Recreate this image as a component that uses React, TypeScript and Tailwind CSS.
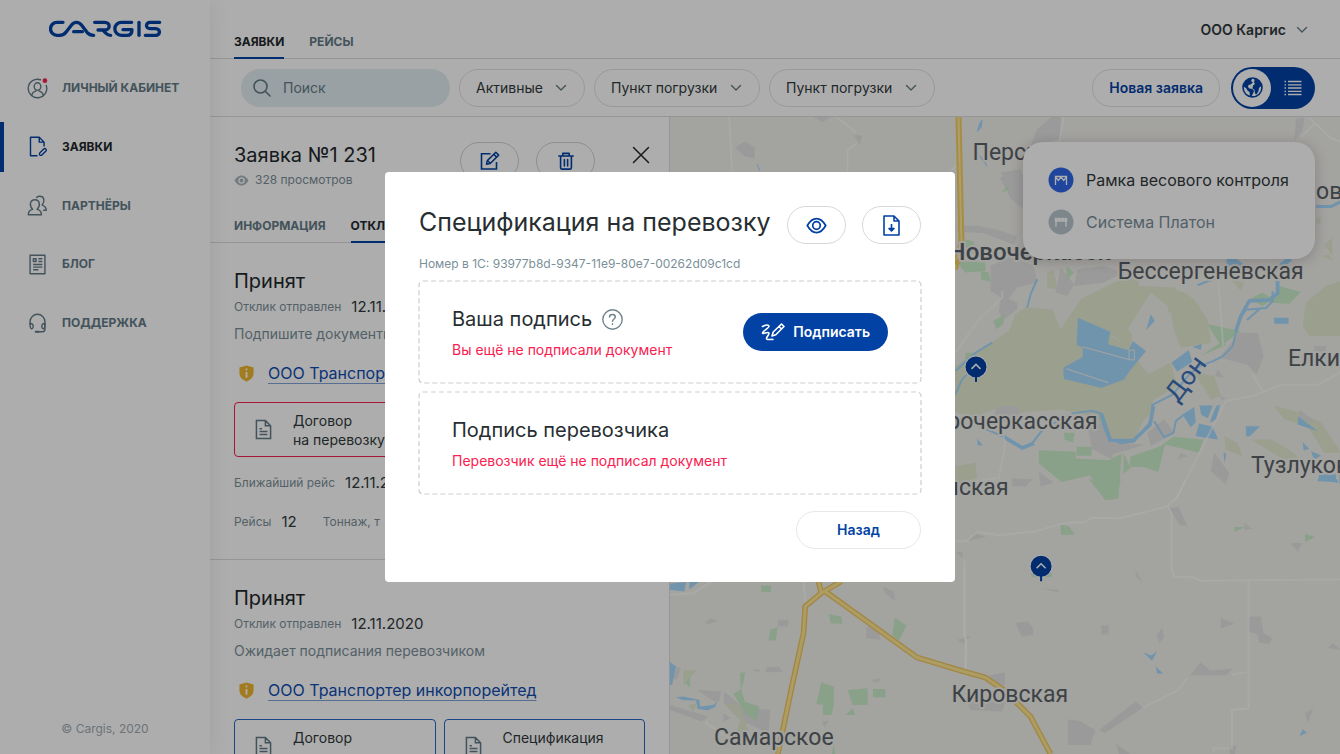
import type { ReactNode } from 'react';

const filters = ['Активные', 'Пункт погрузки', 'Пункт погрузки'];

function Svg({ className, children, box = '0 0 24 24' }: { className: string; children: ReactNode; box?: string }) {
  return (
    <svg
      className={className}
      viewBox={box}
      fill="none"
      stroke="currentColor"
      strokeWidth={1.6}
      strokeLinecap="round"
      strokeLinejoin="round"
      aria-hidden="true"
    >
      {children}
    </svg>
  );
}

function Chevron({ className }: { className: string }) {
  return (
    <Svg className={className} box="0 0 12 12">
      <path d="M1.5 3.5L6 8l4.500-4.500" strokeWidth={1.400} />
    </Svg>
  );
}

function Logo() {
  return (
    <svg
      className="w-[113px] h-[18px] text-[#0342a5]"
      viewBox="146 61 339 54"
      fill="none"
      stroke="currentColor"
      strokeWidth={10}
      strokeLinecap="round"
      strokeLinejoin="round"
      role="img"
      aria-label="Cargis"
    >
      <path d="M188 68H170a19.500 19.500 0 0 0 0 39h8c10 0 15-4 20-11l15-19c8-11 22-12 31 0l16 21c6 7 10 9 20 9" />
      <path d="M220 96h26" />
      <path d="M283 68h30c18 0 18 23 0 23h-20M308 92l10 10c4 4 7 5 13 5" />
      <path d="M394 68H363a19.500 19.500 0 0 0 0 39h17c10 0 15-5 15-17h-27" />
      <path d="M416 68v39" />
      <path d="M478 68h-29c-14 0-14 19 0 19h17c15 0 15 20 0 20h-31" />
    </svg>
  );
}

const EyeIcon = ({ className }: { className: string }) => (
  <Svg className={className}>
    <path d="M1.500 12C4.500 6.500 8 4 12 4s7.500 2.500 10.500 8C19.500 17.500 16 20 12 20S4.500 17.500 1.500 12z" strokeWidth={2} />
    <circle cx="12" cy="12" r="4.300" strokeWidth={2} />
  </Svg>
);

const DocIcon = ({ className }: { className: string }) => (
  <Svg className={className} box="0 0 18 22">
    <path d="M1.500 1.500h9.500l5.500 5.500v13.500h-15zM11 1.500V7h5.500M4.800 10.200h2.500M4.800 13.200h8.400M4.800 16.400h8.400" strokeLinecap="butt" strokeLinejoin="miter" />
  </Svg>
);

const ShieldIcon = () => (
  <svg className="w-[15px] h-[17px] ml-[5px] mr-1" viewBox="0 0 16 18" aria-hidden="true">
    <path d="M8 .5l7.500 2v6.500c0 4-3 6.500-7.500 8.700C3.500 15.500.5 13 .5 9V2.500z" fill="#edb52c" />
    <path d="M8 3.600v2M8 7.500v6" stroke="#fff" strokeWidth="2" />
  </svg>
);

const navItems = [
  {
    label: 'Личный кабинет',
    icon: (
      <>
        <path d="M15.500 2A10.600 10.600 0 1 0 22 8.500" />
        <ellipse cx="12" cy="9.800" rx="3.800" ry="4.300" />
        <path d="M5.300 20c.5-2.800 2-4.300 4.700-5M18.700 20c-.5-2.800-2-4.300-4.700-5" />
        <circle cx="20.500" cy="3" r="2.700" fill="#fa2050" stroke="none" />
      </>
    ),
  },
  {
    label: 'Заявки',
    active: true,
    icon: (
      <>
        <path d="M12 22.500H4V1.500h10l5.500 5.500v5M14 1.500V7h5.500" strokeLinecap="butt" />
        <path d="M14.500 19.500l4.700-4.700c1.500-1.300 3.800.8 2.500 2.400l-4.700 4.600c-2 1-3.600-.5-2.500-2.300z" />
      </>
    ),
  },
  {
    label: 'Партнёры',
    icon: (
      <>
        <path d="M1.500 22.500c0-4 1.500-5.200 5-6-4.500-4.500-3-11 2.500-11s7 6.500 2.500 11c3.500.8 5 2 5 6z" />
        <path d="M11 2.800c1-1 2.200-1.300 3.500-1.300 5.200 0 6.500 5.500 2.800 10 3.200 1 4.700 2.300 4.700 6h-3" />
      </>
    ),
  },
  {
    label: 'Блог',
    icon: (
      <>
        <path d="M3.500 1.500h17v21h-17z" />
        <path d="M7.300 5.500h3v3h-3zM13 5.500h4.500M13 8.500h4.500M7 12h10.500M7 15h10.500M7 18h6" strokeLinecap="butt" />
      </>
    ),
  },
  {
    label: 'Поддержка',
    icon: (
      <>
        <path d="M3.500 12.500V10a8.500 8.500 0 0 1 17 0v8.500c0 2-1 3-3 3h-5.500" />
        <path d="M3.500 12c4.500-.8 4.500 6.500 1.500 6-1.500-.5-1.500-3-1.500-6zM20.500 12c-4.500-.8-4.500 6.500-1.500 6 1.500-.5 1.500-3 1.500-6z" />
        <path d="M10 21.500h3" strokeWidth={2.400} />
      </>
    ),
  },
];

function Sidebar() {
  return (
    <aside className="relative z-10 w-[210px] shrink-0 flex flex-col bg-white shadow-[0_0_20px_rgba(0,0,0,0.08)]">
      <a href="#" className="mt-5 ml-[49px]">
        <Logo />
      </a>
      <nav className="mt-[25px] h-[285px] flex flex-col justify-between">
        {navItems.map((item) => (
          <a
            key={item.label}
            href="#"
            className={`relative h-[50px] pl-[27px] flex items-center gap-3.5 text-xs font-bold uppercase ${
              item.active ? 'text-[#22292c]' : 'text-[#637b86]'
            }`}
          >
            {item.active && <span className="absolute left-0 inset-y-0 w-1 bg-[#0342a5]" />}
            <Svg className={`w-[21px] h-[21px] ${item.active ? 'text-[#0342a5]' : ''}`}>{item.icon}</Svg>
            {item.label}
          </a>
        ))}
      </nav>
      <p className="mt-auto mb-[15px] text-center text-xs leading-5 text-[#9fabb2]">© Cargis, 2020</p>
    </aside>
  );
}

function Tab({ active, children }: { active?: boolean; children: ReactNode }) {
  return (
    <button
      type="button"
      className={`-mb-px pb-[7px] border-b-2 text-xs leading-4 font-bold uppercase ${
        active ? 'border-[#0342a5] text-[#22292c]' : 'border-transparent text-[#637b86]'
      }`}
    >
      {children}
    </button>
  );
}

function Toolbar() {
  return (
    <div className="h-[58px] shrink-0 pl-[31px] pr-[25px] flex items-center gap-[9px] border-b border-[#dcdcdc]">
      <label className="w-[209px] h-[38px] px-3 flex items-center gap-3 rounded-full bg-[#e3edf2] text-[#637b86]">
        <Svg className="w-[18px] h-[18px] shrink-0" box="0 0 18 18">
          <circle cx="7.500" cy="7.500" r="6.500" />
          <path d="M12.300 12.300L17 17" />
        </Svg>
        <input
          type="search"
          aria-label="Поиск"
          placeholder="Поиск"
          className="w-full bg-transparent text-sm outline-none placeholder:text-[#637b86]"
        />
      </label>
      {filters.map((name, i) => (
        <div key={i} className="relative">
          <select
            aria-label={name}
            className="h-[38px] pl-4 pr-[41px] appearance-none rounded-full border border-[#e2e2e2] bg-white text-sm text-[#31393c]"
          >
            <option>{name}</option>
          </select>
          <Chevron className="absolute right-[18px] top-[13px] w-3 h-3 text-[#637b86] pointer-events-none" />
        </div>
      ))}
      <button
        type="button"
        className="ml-auto h-[38px] px-4 rounded-full border border-[#e2e2e2] text-sm font-semibold text-[#0342a5]"
      >
        Новая заявка
      </button>
      <div className="ml-0.5 w-[84px] h-[42px] p-0.5 flex rounded-full bg-[#0342a5]">
        <button type="button" aria-label="Карта" className="w-[38px] h-[38px] flex items-center justify-center rounded-full bg-white text-[#0342a5]">
          <svg className="w-[21px] h-[21px]" viewBox="0 0 21 21" aria-hidden="true">
            <circle cx="10.500" cy="10.500" r="9.500" fill="#fff" stroke="currentColor" strokeWidth="1.600" />
            <path d="M1.500 8l3-5 4-2 1.500 1.500-1 1.500 2 1.500-2.500 2-2 .5-.5 2 1.500 1.500 3 .5 1.500 2-1 2.500-1.500 3-1.500-.5-.5-4-2-1.500-1.500-2.500-2-1zM12 1.500l4 1.500 3 3.500 1 4-1.500-1-1.500 1.500-.5 3-2 3.500-1.500-1-.5-3.500-2-1.500.5-3 2-1.500-1-1.500.5-2z" fill="currentColor" />
            <path d="M5 17.500l4 1.500h4l3-1.500-3 2.500H8z" fill="currentColor" />
          </svg>
        </button>
        <button type="button" aria-label="Список" className="flex-1 pl-0.5 flex items-center justify-center text-white">
          <svg className="w-[18px] h-4" viewBox="0 0 18 16" stroke="currentColor" strokeWidth="1.300" aria-hidden="true">
            <path d="M.5 1.500h1.500M4 1.500h13.500M.5 4.800h1.500M4 4.800h13.500M.5 8h1.500M4 8h13.500M.5 11.300h1.500M4 11.300h13.500M.5 14.500h1.500M4 14.500h13.500" />
          </svg>
        </button>
      </div>
    </div>
  );
}

function DocCard({ title, tone }: { title: string; tone: string }) {
  return (
    <button type="button" className={`h-[55px] pl-5 flex items-center gap-[21px] rounded border text-left text-sm leading-[19px] text-[#31393c] ${tone}`}>
      <DocIcon className="w-[17px] h-[21px] text-[#637b86]" />
      <span>
        {title}
        <br />
        на перевозку
      </span>
    </button>
  );
}

function Reply({ note, tone }: { note: string; tone: string }) {
  return (
    <article className="h-[317px] shrink-0 px-6 pt-6 border-b border-[#dcdcdc]">
      <h2 className="text-xl leading-7 text-[#22292c]">Принят</h2>
      <p className="mt-0.5 flex items-center gap-2.5 text-xs leading-5 text-[#7b8f99]">
        Отклик отправлен <span className="text-[15px] leading-5 text-[#31393c]">12.11.2020</span>
      </p>
      <p className="mt-[7px] text-sm leading-5 text-[#7b8f99]">{note}</p>
      <div className="mt-[17px] flex items-center gap-2.5">
        <ShieldIcon />
        <a href="#" className="text-base leading-6 text-[#0f4db0] underline decoration-1 underline-offset-4 decoration-[#7fa3d8]">
          ООО Транспортер инкорпорейтед
        </a>
      </div>
      <div className="mt-[17px] grid grid-cols-2 gap-2">
        <DocCard title="Договор" tone={tone} />
        <DocCard title="Спецификация" tone={tone} />
      </div>
      <p className="mt-4 flex items-center gap-2.5 text-xs leading-5 text-[#7b8f99]">
        Ближайший рейс <span className="text-[15px] leading-5 text-[#31393c]">12.11.2020</span>
      </p>
      <p className="mt-[19px] flex items-center gap-2.5 text-xs leading-5 text-[#7b8f99]">
        Рейсы <span className="mr-4 text-[15px] leading-5 text-[#31393c]">12</span>
        Тоннаж, т <span className="text-[15px] leading-5 text-[#31393c]">240</span>
      </p>
    </article>
  );
}

function RequestPanel() {
  return (
    <section className="w-[460px] shrink-0 flex flex-col overflow-hidden border-r border-[#dcdcdc] bg-white">
      <div className="h-[81px] shrink-0 pt-[25px] px-6 flex items-start">
        <div>
          <h1 className="text-xl leading-[26px] text-[#22292c]">Заявка №1 231</h1>
          <p className="mt-0.5 flex items-center gap-1.5 text-xs leading-5 text-[#7b8f99]">
            <svg className="w-[15px] h-[11px]" viewBox="0 0 15 11" aria-hidden="true">
              <path d="M.5 5.500C2.500 2 4.800.5 7.500.5s5 1.500 7 5c-2 3.500-4.300 5-7 5s-5-1.500-7-5z" fill="#a9b5bc" />
              <circle cx="7.500" cy="5.500" r="2.600" fill="#a9b5bc" stroke="#fff" strokeWidth="1.300" />
            </svg>
            328 просмотров
          </p>
        </div>
        <div className="ml-auto flex gap-[17px]">
          <button type="button" aria-label="Редактировать" className="w-[59px] h-[38px] flex items-center justify-center rounded-full border border-[#d2d2d2] text-[#0342a5]">
            <Svg className="w-5 h-5" box="0 0 20 20">
              <path d="M10.500 2.800H1.500V18h15v-7" strokeLinecap="butt" strokeLinejoin="miter" />
              <path d="M6.500 13.200l.8-3.600 8.500-8.300 2.900 2.800-8.500 8.400zM13.800 3.300l2.800 2.800M8 10l2 2" strokeWidth={1.500} />
            </Svg>
          </button>
          <button type="button" aria-label="Удалить" className="w-[59px] h-[38px] flex items-center justify-center rounded-full border border-[#d2d2d2] text-[#0342a5]">
            <Svg className="w-[18px] h-[18px]" box="0 0 20 20">
              <path d="M2 4.500h16M6.500 4V1.500h7V4M4 5v12.500c0 .8.500 1.500 1.300 1.500h9.400c.8 0 1.300-.7 1.300-1.500V5M8.200 8.500v7M11.800 8.500v7" strokeWidth={1.800} />
            </Svg>
          </button>
          <button type="button" aria-label="Закрыть" className="ml-5 mt-1 mr-[-5px] w-[18px] h-[18px] text-[#22292c]">
            <Svg className="w-[18px] h-[18px]" box="0 0 18 18">
              <path d="M1.500 1.500l15 15M16.500 1.500l-15 15" strokeWidth={1.500} />
            </Svg>
          </button>
        </div>
      </div>
      <div className="h-[45px] shrink-0 px-6 flex items-end gap-[25px] border-b border-[#dcdcdc]">
        <Tab>Информация</Tab>
        <Tab active>Отклики</Tab>
      </div>
      <Reply note="Подпишите документы" tone="border-[#fa2050]" />
      <Reply note="Ожидает подписания перевозчиком" tone="border-[#2a66c4]" />
    </section>
  );
}

const places = [
  { name: 'Персиановский', x: 972, y: 161 },
  { name: 'Бессергеневская', x: 1117, y: 280 },
  { name: 'ов', x: 1315, y: 200 },
  { name: 'Елкин', x: 1287, y: 367 },
  { name: 'Тузлуков', x: 1250, y: 473 },
  { name: 'Старочеркасская', x: 1097, y: 430, end: true },
  { name: 'Ольгинская', x: 1008, y: 495, end: true },
  { name: 'Кировская', x: 951, y: 702 },
  { name: 'Самарское', x: 714, y: 745 },
];

function MapPin({ x, y }: { x: number; y: number }) {
  return (
    <g transform={`translate(${x} ${y})`}>
      <circle r="11" fill="#0342a5" stroke="#fff" strokeWidth="1" />
      <path d="M0 9v6" stroke="#0342a5" strokeWidth="2" />
      <path d="M-4.500 2L0-2.500 4.500 2" fill="none" stroke="#fff" strokeWidth="1.500" />
    </g>
  );
}

function RegionMap() {
  return (
    <svg className="w-full h-full" viewBox="670 118 670 636" preserveAspectRatio="xMinYMin slice" role="img" aria-label="Карта региона">
      <path d="M670 118h670v636H670z" fill="#f1f0ec" />

      {/* northern steppe */}
      <g transform="translate(660 110) scale(.33333)">
        <path d="M225 115l30-18 30 20-2 32-30-8zM455 22l60-2-27 20zM580 78l26 2-7 28zM1018 205l60-15 20 10 0 110-50-45zM1130 60l70-60v90l-90 20zM890 350l60 0 60 12 60 20-10 25-90-35-80-5z" fill="#e4e4e4" />
        <path d="M1022 250l20-20 15 8zM915 390l25 8 5 40-30-20z" fill="#ccedcb" />
        <path d="M207 20l9 165M527 22l60 48M587 105l-25 18v65M870 185l20-15" stroke="#fff" strokeWidth="5" fill="none" opacity=".7" />
        <path d="M965 32l-3 22-11 13 5-20zM292 165l6 20M955 140l15 12 10 20" stroke="#a7daff" strokeWidth="3" fill="#a7daff" />
        <path d="M894 20l9 380-20 80" stroke="#f6cf62" strokeWidth="18" fill="none" />
        <path d="M894 20l9 380-20 80" stroke="#ffea9e" strokeWidth="6" fill="none" />
      </g>

      {/* roads and fields behind the legend */}
      <g transform="translate(960 0) scale(.33333)">
        <path d="M1005 360l25-5-5 40-25 30zM120 520l60-10 10 90-30-10z" fill="#e4e4e4" />
        <path d="M310 352l-15 80M1040 352l70 65 25 10 10 20M1060 375l-40 40" stroke="#fff" strokeWidth="5" fill="none" opacity=".7" />
        <path d="M1065 622h45l30-15" stroke="#a7daff" strokeWidth="9" fill="none" />
        <path d="M1090 740l22-25 3 55zM1065 655h14v18h-14zM1082 770l20-5 15 20z" fill="#e4ead2" />
        <path d="M800 800l20-20 40 30M940 810l50-30" stroke="#a7daff" strokeWidth="10" fill="none" />
      </g>

      {/* the Don valley */}
      <g transform="translate(940 240) scale(.33333)">
        <path d="M45 380l100-65 60-40 20-50 30-20 80 5 25 60 60-90 120-60 50-10 5 30 110 5 20 60-40 15-50-10-60 60-5 70 50 60 20 120-30 20-30 60-70 10-60-80-90-20-120 10-80-10-80 30-60-40-40 10z" fill="#e4ead2" />
        <path d="M690 150l40 10 30 20 40 60 10 70-90 15-20-50-10-60zM1095 190l60-50 60-20v170h-110l-20-30zM520 480l30-70 80-10 60-30 20 70-70 40-50 75h-35l5-50zM760 400l60 10 20 60-30 10zM850 590l40 20 15 40-50-20zM930 600l60 0 70 40 20 30-60-15zM1000 500l80 20 60 30 60 90-50 0-50-80-70-20zM320 100l20-10 10 60-30-5zM870 120l40 10-10 25zM45 680l60-10 5 45-65 20z" fill="#e4ead2" />
        <path d="M560 270l70-110 50 40 20 100-40 40-50-20z" fill="#f1f0ec" />
        <path d="M150 80l60-30 70 30 10 50-60 15-30 40-50-30zM360 85l40 50-20 35-35-10zM410 90l80-10 60 20-60 30-90 10zM180 170l50 20 0 20-40 30-15-20zM835 355l60-75 55 0 18 70-20 55-30-30zM830 390l20 25-28-5zM170 500l60 0 10 20-30 35-50-30zM440 560l50-10 15 60 110 5-100 30 0 15-60-30zM620 580l50-40 30 40-70 40zM820 640l45 60-10 35-45-40zM215 715l60 5-20 20h-40zM295 695l45 35-40 10zM710 660l30-10-20-10zM835 470l20 5-10 10zM1075 510l50 40-50-10zM1120 320l35 0v20h-35z" fill="#e4e4e4" />
        <path d="M295 632l110 5 0 20 100 5 38-20-10 135-40 5-45-75-85 20-68-55zM408 622h45v27h-45zM568 652l90-32 40-28 90 8-15 40-60-15-40-10-20 82-45-15-40 0zM548 640l22 45-22 18zM370 580l32 0-5 30-25-10zM985 190l30-50 65 18-35 35zM800 255l100 20-60 45zM780 350l65-45 10 12zM158 245l35-20-5 30-20 15zM925 180l40-20 30 20-30 20zM120 95l25 5 5 27-27-5zM378 80l22 20-22 22zM45 65l90 5 0 25-60 5zM75 340h30l-30 40z" fill="#ccedcb" />
        <path d="M412 235l97 42-7 38 62 18 12-28 40 30-46 56-20 28-70 26-110-27 2-35 54-30v-27l-18-10zM630 225l12 20-26 28zM692 370l52-38 10 35-45 30zM755 322l28-8-3 18zM998 235h45v18h-42zM725 525l35-22 5 45-15 15zM776 498h40l-15 38-20-10zM838 495l-12 45-20 10 20-50zM775 552l40 10 17 38-68-10zM915 560h42l-30 30h-12zM1072 530l58 45-60-20zM1085 608l20 20-17 5zM1110 635l30 12-20 15zM1135 705l50 0v22l-55-2zM848 638l8 5-5 28zM110 597l17 20h-15zM1195 705h5v28l-5 0z" fill="#a7daff" />
        <path d="M368 388l10-10 115 30 62 10-70 26-115-25z" fill="#a7daff" />
        <path d="M512 290l25 15M565 333h16v28h-16zM425 322l145 40M378 388l125 42" stroke="#f1f0ec" strokeWidth="3" fill="none" />
        <path d="M45 465l20-45 15-15M45 395l60-55 50-30M260 205l10-40 20-45M115 560l70 30 60 36 30-15 35-45 90-45 55-7 30 10 25 75 30 12 40-5 50-60 5-50 60-30 50-60 30-25 40-15 30-15 30-30 20-80 20-30 60-5 20-20v-30M640 545l30 48 28-13 7-35 25-20M918 242l38-33M770 138l50-20 50-55" stroke="#a7daff" strokeWidth="6" fill="none" />
        <path d="M885 275l15-45 25-45 60-3 25-20v-50M480 525l28 78h70l50-48 10-55M190 592l55 33 35-14" stroke="#a7daff" strokeWidth="11" fill="none" />
        <path d="M860 60l40 30M1020 80l25-20" stroke="#a7daff" strokeWidth="16" fill="none" />
        <path d="M45 340l70-100 70-65v-20M45 525l50 5 80 20 20 60-20 105-130 20M832 120l15 200M705 780l150-295 85-17 80-32h110l70-38M935 405l30 50" stroke="#fff" strokeWidth="6" fill="none" opacity=".55" />
        <path d="M45 75l20-20" stroke="#f6cf62" strokeWidth="14" />
      </g>

      {/* south-east */}
      <g transform="translate(940 480) scale(.33333)">
        <path d="M85 183l20-22 32 10zM225 430l35-5 18 20v20l-33 5zM482 437h22v27h-22zM648 465l17-22 5 30-15 17zM685 85l28-3 27 57-22-3zM910 130l26 18-26 2zM1048 190h37l-15 25zM583 270l25 40-20-15zM300 325l55 6v8zM840 415l42 17-42 13zM922 410h38l8 50 27 15-10 18-30-5-5-25-28-8zM747 587l33-40 28 25 68-5-20 20zM475 750l110-85 22 18-115 77zM382 718l35 5 47 27-15 45h-67zM50 480l42-12-25 24zM145 587l48-10v35l-20 20zM83 678l110-5-10 22-95-10zM1160 505l15-15 25 20zM1092 700l25-14-17 44zM525 790l45 32h-35zM865 800l22-5-5 27h-15zM210 5l60-5-15 22zM45 220l20-5 3 20z" fill="#e4e4e4" />
        <path d="M445 0h95l-12 55-35 5zM360 135l25 5 18 25h-42zM880 142l32 0-30 14zM1092 162l30 10-30 15zM272 280h62v12h-62z" fill="#ccedcb" />
        <path d="M607 517l25 10 17-12-15 28zM645 560l22 21h-18zM1085 748l13 10-22 10zM1130 0h60v10z" fill="#a7daff" />
        <path d="M45 185h30l37-28 65 10 110-12 75-23 70-5 25-13 80 2 145-36 10 20v165l7 25 60 3 20 10 430-4M678 80l30-25 27-55M72 240v225l5 20v85M923 300v385l-50 5v115h-55v15M873 584l50-8M740 595l-30 37-103 51" stroke="#fff" strokeWidth="6" fill="none" opacity=".6" />
      </g>

      {/* south-west with the highway */}
      <g transform="translate(660 570) scale(.33333)">
        <path d="M668 50l32 15 5 30-30-25zM353 150h33l-3 20h-30zM137 155l15-10 22 10-37 8zM618 170l40 5v35l-40-5zM1065 160l35-5 17 20v20l-33 5zM317 293l40-2 12 15-52 2zM110 360l73 5-5 30-15 0zM270 298l30 2-5 7zM632 330l30-5-10 14zM192 365l60 50 78 5-5 70-85-40-48-50zM30 405l115 35-20 15-95-35zM190 430l22 15-22 10zM485 453h22l-15 20zM50 290l13 5-13 35-12-5zM920 395h115l-10 30-95-5z" fill="#e4e4e4" />
        <path d="M70 300l38 2-38 45zM85 405l25-5-10 25zM195 400l40 5 30 75-35 10 10-40z" fill="#e4ead2" />
        <path d="M303 47h30v20h-30zM505 133l38 7 3 22-35-2zM703 143l35 24-22 45-20-15zM330 180l22-8-5 40h-22zM240 308l16 0-12 52 10 35 43 15-5 45-37-25-35-58 22-15zM483 338l38 12v55l-8 30h-25v-30l-20-3zM562 360l60-5v50h-45zM638 357h37v25h-37zM577 415l8 20-28 0zM520 525l5 27h-10zM75 340l15-22v35z" fill="#ccedcb" />
        <path d="M28 42l50-5-5 28-43-5zM88 37h28l-28 22zM28 275l20 15-12 55h-8zM48 382l22-2 48 10 2 20 40-5 12-12-7 18-22 10-30-4-5-25-40-2z" fill="#a7daff" />
        <path d="M30 75l70-5 55-35M430 35l5 60M912 0v200l5 10-2 90M140 452v10l100 60" stroke="#fff" strokeWidth="7" fill="none" opacity=".6" />
        <path d="M475 35l8 35-48 40-5 80-35 160-42 202M483 70l60-35M495 65l275 198 140 42 65 18 55 37 80 80 60 112" stroke="#f1c660" strokeWidth="17" fill="none" />
        <path d="M475 35l8 35-48 40-5 80-35 160-42 202M483 70l60-35M495 65l275 198 140 42 65 18 55 37 80 80 60 112" stroke="#fde793" strokeWidth="9" fill="none" />
      </g>

      <g fontFamily="Roboto, sans-serif" fontSize="23" fill="#5b6268" stroke="#f1f0ec" strokeWidth="4" paintOrder="stroke" strokeLinejoin="round">
        {places.map((p) => (
          <text key={p.name} x={p.x} y={p.y} textAnchor={p.end ? 'end' : 'start'}>
            {p.name}
          </text>
        ))}
        <text x="1110" y="261" fontSize="24" fontWeight="500" textAnchor="end">Новочеркасск</text>
      </g>
      <text x="1177" y="404" transform="rotate(-53 1177 404)" fontFamily="Roboto, sans-serif" fontSize="26" fill="#3d6fb5">
        Дон
      </text>
      <MapPin x={975.5} y={367.5} />
      <MapPin x={1040.5} y={566.5} />
    </svg>
  );
}

function Gate({ on }: { on?: boolean }) {
  return (
    <svg className={`w-[26px] h-[26px] ${on ? 'text-[#2f68e6]' : 'text-[#b9c6cc]'}`} viewBox="0 0 26 26" aria-hidden="true">
      <circle cx="13" cy="13" r="12.500" fill="currentColor" />
      {on ? (
        <path d="M7.500 18V9.500h11V18M7.500 10l2.800 3.500L13 10l2.700 3.500 2.800-3.500" fill="none" stroke="#fff" strokeWidth="1.300" />
      ) : (
        <path d="M6.500 8.500h13v4.500H19v5h-2v-5H9v5H7v-5h-.5zM9 10.200h1M12.500 10.200h1M16 10.200h1" fill="#fff" stroke="currentColor" strokeWidth=".6" />
      )}
    </svg>
  );
}

function Legend() {
  return (
    <div className="absolute top-[25px] right-[25px] w-[292px] h-[117px] pl-[25px] flex flex-col justify-center gap-4 rounded-[20px] bg-white text-base text-[#31393c] shadow-[0_2px_14px_rgba(0,0,0,0.2)]">
      <button type="button" aria-pressed="true" className="flex items-center gap-3">
        <Gate on />
        Рамка весового контроля
      </button>
      <button type="button" aria-pressed="false" className="flex items-center gap-3 text-[#7b8f99]">
        <Gate />
        Система Платон
      </button>
    </div>
  );
}

function SignBox({ children }: { children: ReactNode }) {
  return (
    <div className="relative h-[102px] px-[33px] flex items-center justify-between">
      {/* long dashes, which a CSS dashed border cannot give */}
      <svg className="absolute inset-0 w-full h-full overflow-visible pointer-events-none" aria-hidden="true">
        <rect width="100%" height="100%" rx="4" fill="none" stroke="#cdcdcd" strokeWidth="1.200" strokeDasharray="5 3" />
      </svg>
      {children}
    </div>
  );
}

function SignModal() {
  return (
    <div className="fixed inset-0 z-20 flex items-center justify-center bg-black/32">
      <div role="dialog" aria-modal="true" aria-labelledby="modal-title" className="w-[570px] px-[34px] pt-[34px] pb-[33px] rounded bg-white">
        <div className="flex items-start">
          <h2 id="modal-title" className="mr-auto text-[25px] leading-8 text-[#272e31]">
            Спецификация на перевозку
          </h2>
          <button type="button" aria-label="Просмотреть" className="w-[59px] h-[38px] flex items-center justify-center rounded-full border border-[#d8d8d8] text-[#0342a5]">
            <EyeIcon className="w-[21px] h-[21px]" />
          </button>
          <button type="button" aria-label="Скачать" className="ml-4 w-[59px] h-[38px] flex items-center justify-center rounded-full border border-[#d8d8d8] text-[#0342a5]">
            <Svg className="w-[17px] h-[21px]" box="0 0 17 21">
              <path d="M1 1h10l5 5v14H1zM11 1v5h5" strokeLinecap="butt" />
              <path d="M8.500 9v6" strokeLinecap="butt" />
              <path d="M6 13.500h5L8.500 16z" fill="currentColor" />
            </Svg>
          </button>
        </div>
        <p className="mt-2.5 mb-[7px] text-xs leading-5 text-[#7b8f99]">Номер в 1С: 93977b8d-9347-11e9-80e7-00262d09c1cd</p>
        <div className="flex flex-col gap-[9px]">
          <SignBox>
            <div>
              <h3 className="flex items-center gap-2.5 text-xl leading-[30px] text-[#272e31]">
                Ваша подпись
                <Svg className="w-[21px] h-[21px] text-[#71848e]" box="0 0 21 21">
                  <circle cx="10.500" cy="10.500" r="9.700" strokeWidth={1.400} />
                  <path d="M7.500 8c.2-3.500 5.800-3.500 5.800 0 0 2-2.800 2-2.800 4.300M10.500 14.800v.4" strokeWidth={1.500} />
                </Svg>
              </h3>
              <p className="mt-1.5 text-sm leading-5 text-[#fa2050]">Вы ещё не подписали документ</p>
            </div>
            <button type="button" className="h-[38px] px-[18px] flex items-center gap-2 rounded-full bg-[#0342a5] text-sm font-semibold text-white">
              <Svg className="w-6 h-[18px]" box="0 0 24 18">
                <path d="M1.500 3.500c3-2 6-2 6.500-.5.500 2-6.500 5-6.500 7 0 1.500 5-1.500 6.300-.2C9 11.500 4 15 6 16.200c1.500.6 3.500 0 6 .3" />
                <path d="M11 13l1.200-4L20.500 1l2.500 2.500-8.200 8.300zM18 3.500l2.500 2.500" />
              </Svg>
              Подписать
            </button>
          </SignBox>
          <SignBox>
            <div>
              <h3 className="text-xl leading-[30px] text-[#272e31]">Подпись перевозчика</h3>
              <p className="mt-1.5 text-sm leading-5 text-[#fa2050]">Перевозчик ещё не подписал документ</p>
            </div>
          </SignBox>
        </div>
        <div className="mt-[17px] flex justify-end">
          <button type="button" className="w-[125px] h-[38px] rounded-full border border-[#e8e8e8] text-sm font-semibold text-[#0342a5]">
            Назад
          </button>
        </div>
      </div>
    </div>
  );
}

export default function App() {
  return (
    <div className="h-screen flex overflow-hidden bg-white font-['Inter',sans-serif]">
      <Sidebar />
      <main className="flex-1 min-w-0 flex flex-col">
        <header className="h-[59px] shrink-0 px-6 flex items-end border-b border-[#dcdcdc]">
          <div className="flex gap-[25px]">
            <Tab active>Заявки</Tab>
            <Tab>Рейсы</Tab>
          </div>
          <button type="button" className="ml-auto mb-[18px] mr-2 flex items-center gap-2.5 text-sm leading-5 font-semibold text-[#31393c]">
            ООО Каргис
            <Chevron className="w-3 h-3 text-[#637b86]" />
          </button>
        </header>
        <Toolbar />
        <div className="flex-1 min-h-0 flex">
          <RequestPanel />
          <div className="relative flex-1 min-w-0 overflow-hidden">
            <RegionMap />
            <Legend />
          </div>
        </div>
      </main>
      <SignModal />
    </div>
  );
}
